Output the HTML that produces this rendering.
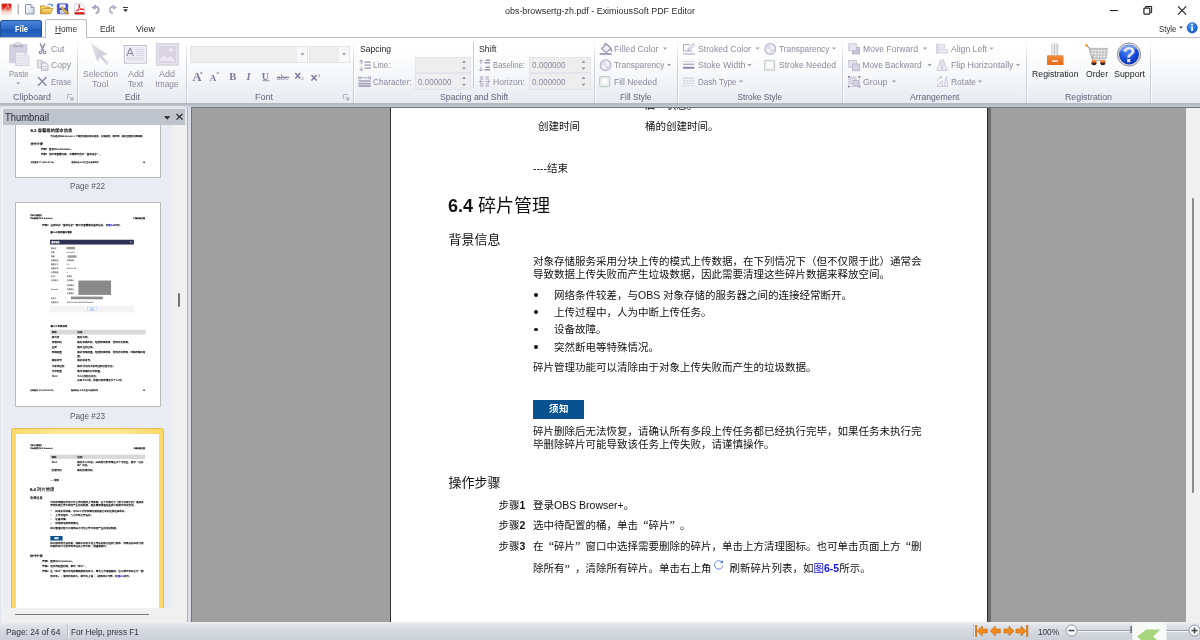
<!DOCTYPE html>
<html lang="zh">
<head>
<meta charset="utf-8">
<title>obs-browsertg-zh.pdf - EximiousSoft PDF Editor</title>
<style>
*{box-sizing:border-box;margin:0;padding:0}
html,body{width:1200px;height:640px;overflow:hidden;background:#fff}
body{position:relative;font-family:"Liberation Sans","Noto Sans CJK SC",sans-serif;font-size:9px;color:#1e1e1e}
.abs{position:absolute}
#app{left:0;top:0;width:1200px;height:640px;will-change:transform}
.t{position:absolute;white-space:nowrap;line-height:1.06;transform-origin:0 50%}
.pg{position:absolute;left:0;top:0;width:596px;height:843px;transform-origin:0 0;font-family:"Liberation Sans","Noto Sans CJK SC",sans-serif;color:#111}
.pl{position:absolute;white-space:nowrap;line-height:1.47;color:#111;text-spacing-trim:space-all}
.ql,.qr{display:inline-block;width:1em;font-style:normal;font-family:"Liberation Serif","Noto Serif CJK SC",serif;font-size:1.15em;line-height:1;width:.87em}
.ql{text-align:right}
.qr{text-align:left}
.th{text-rendering:geometricPrecision}
.th .pl{-webkit-text-stroke:.4px}
.lb{font-family:"Liberation Sans",sans-serif;font-weight:bold}
</style>
</head>
<body>
<div class="abs" id="app">
<div class="abs" style="left:0;top:0;width:1200px;height:38px;background:#fff"></div>
<span class="t" style="left:505.00px;top:6.82px;font-size:8.30px;color:#2b2b2b;transform:scaleX(1.075);">obs-browsertg-zh.pdf - EximiousSoft PDF Editor</span>
<div class="abs" style="left:0;top:37px;width:1200px;height:66px;background:linear-gradient(#fff 0,#fff 22%,#f7f8fa 55%,#eceff3 85%,#e7eaef 100%)"></div>
<div class="abs" style="left:0;top:37px;width:1200px;height:1px;background:#bcc1c9"></div>
<div class="abs" style="left:0;top:103px;width:1200px;height:2.500px;background:linear-gradient(#b2b7c0,#bcc1c9)"></div>
<div class="abs" style="left:0;top:105.500px;width:188px;height:2px;background:#dfe2e8"></div><div class="abs" style="left:188px;top:105.500px;width:1012px;height:2px;background:#c6cad1"></div>
<div class="abs" style="left:0;top:19.500px;width:42px;height:17.500px;border-radius:3px 3px 0 0;background:linear-gradient(#4a86d8 0,#2f6cc9 45%,#1f59b6 55%,#2a68c4 100%);border:1px solid #1d4f9f;border-bottom:none"></div>
<span class="t" style="left:14.50px;top:24.92px;font-size:8.30px;color:#fff;transform:scaleX(0.909);font-weight:bold;">File</span>
<div class="abs" style="left:45px;top:19px;width:42px;height:19px;border-radius:3px 3px 0 0;background:#fff;border:1px solid #b9bec7;border-bottom:none"></div>
<span class="t" style="left:55.00px;top:25.12px;font-size:8.30px;color:#2b2b2b;">Home</span>
<div class="abs" style="left:55px;top:33.1px;width:6px;height:1px;background:#444"></div>
<span class="t" style="left:99.50px;top:25.12px;font-size:8.30px;color:#2b2b2b;transform:scaleX(1.014);">Edit</span>
<span class="t" style="left:136.00px;top:25.12px;font-size:8.30px;color:#2b2b2b;transform:scaleX(1.065);">View</span>
<span class="t" style="left:1159.00px;top:25.02px;font-size:8.30px;color:#2b2b2b;transform:scaleX(0.948);">Style</span>
<div class="abs" style="left:76.5px;top:41px;width:1px;height:62px;background:linear-gradient(rgba(205,208,216,0),#cfd2da 35%,#c9cdd5 100%)"></div>
<div class="abs" style="left:77.5px;top:41px;width:1px;height:62px;background:linear-gradient(rgba(255,255,255,0),#fff 35%,#fff 100%)"></div>
<div class="abs" style="left:186.0px;top:41px;width:1px;height:62px;background:linear-gradient(rgba(205,208,216,0),#cfd2da 35%,#c9cdd5 100%)"></div>
<div class="abs" style="left:187.0px;top:41px;width:1px;height:62px;background:linear-gradient(rgba(255,255,255,0),#fff 35%,#fff 100%)"></div>
<div class="abs" style="left:353.0px;top:41px;width:1px;height:62px;background:linear-gradient(rgba(205,208,216,0),#cfd2da 35%,#c9cdd5 100%)"></div>
<div class="abs" style="left:354.0px;top:41px;width:1px;height:62px;background:linear-gradient(rgba(255,255,255,0),#fff 35%,#fff 100%)"></div>
<div class="abs" style="left:594.0px;top:41px;width:1px;height:62px;background:linear-gradient(rgba(205,208,216,0),#cfd2da 35%,#c9cdd5 100%)"></div>
<div class="abs" style="left:595.0px;top:41px;width:1px;height:62px;background:linear-gradient(rgba(255,255,255,0),#fff 35%,#fff 100%)"></div>
<div class="abs" style="left:676.5px;top:41px;width:1px;height:62px;background:linear-gradient(rgba(205,208,216,0),#cfd2da 35%,#c9cdd5 100%)"></div>
<div class="abs" style="left:677.5px;top:41px;width:1px;height:62px;background:linear-gradient(rgba(255,255,255,0),#fff 35%,#fff 100%)"></div>
<div class="abs" style="left:841.5px;top:41px;width:1px;height:62px;background:linear-gradient(rgba(205,208,216,0),#cfd2da 35%,#c9cdd5 100%)"></div>
<div class="abs" style="left:842.5px;top:41px;width:1px;height:62px;background:linear-gradient(rgba(255,255,255,0),#fff 35%,#fff 100%)"></div>
<div class="abs" style="left:1025.5px;top:41px;width:1px;height:62px;background:linear-gradient(rgba(205,208,216,0),#cfd2da 35%,#c9cdd5 100%)"></div>
<div class="abs" style="left:1026.5px;top:41px;width:1px;height:62px;background:linear-gradient(rgba(255,255,255,0),#fff 35%,#fff 100%)"></div>
<div class="abs" style="left:1149.5px;top:41px;width:1px;height:62px;background:linear-gradient(rgba(205,208,216,0),#cfd2da 35%,#c9cdd5 100%)"></div>
<div class="abs" style="left:1150.5px;top:41px;width:1px;height:62px;background:linear-gradient(rgba(255,255,255,0),#fff 35%,#fff 100%)"></div>
<div class="abs" style="left:473px;top:42px;width:1px;height:46px;background:#c9ccd4"></div>
<div class="abs" style="left:190px;top:46.4px;width:118.4px;height:16.2px;background:#eeeeef;border:1px solid #e3e3e9"></div>
<div class="abs" style="left:297px;top:47.4px;width:10.4px;height:14.2px;background:#f8f8fa"></div>
<div class="abs" style="left:308.6px;top:46.4px;width:41px;height:16.2px;background:#eeeeef;border:1px solid #e3e3e9"></div>
<div class="abs" style="left:338.5px;top:47.4px;width:10.2px;height:14.2px;background:#f8f8fa"></div>
<div class="abs" style="left:415px;top:57.3px;width:56px;height:16.2px;background:#eeeeef;border:1px solid #e3e3e9"></div>
<div class="abs" style="left:415px;top:73.4px;width:56px;height:16.2px;background:#eeeeef;border:1px solid #e3e3e9"></div>
<div class="abs" style="left:529px;top:57.3px;width:61.5px;height:16.2px;background:#eeeeef;border:1px solid #e3e3e9"></div>
<div class="abs" style="left:529px;top:73.4px;width:61.5px;height:16.2px;background:#eeeeef;border:1px solid #e3e3e9"></div>
<span class="t" style="left:8.75px;top:70.32px;font-size:8.30px;color:#8d899d;transform:scaleX(0.926);">Paste</span>
<span class="t" style="left:51.00px;top:45.22px;font-size:8.30px;color:#8d899d;transform:scaleX(1.045);">Cut</span>
<span class="t" style="left:51.00px;top:61.22px;font-size:8.30px;color:#8d899d;transform:scaleX(1.032);">Copy</span>
<span class="t" style="left:51.00px;top:78.22px;font-size:8.30px;color:#8d899d;transform:scaleX(0.945);">Erase</span>
<span class="t" style="left:82.50px;top:70.22px;font-size:8.30px;color:#8d899d;transform:scaleX(1.025);">Selection</span>
<span class="t" style="left:91.50px;top:80.02px;font-size:8.30px;color:#8d899d;transform:scaleX(1.084);">Tool</span>
<span class="t" style="left:127.50px;top:70.22px;font-size:8.30px;color:#8d899d;transform:scaleX(1.083);">Add</span>
<span class="t" style="left:127.50px;top:80.02px;font-size:8.30px;color:#8d899d;transform:scaleX(0.985);">Text</span>
<span class="t" style="left:159.00px;top:70.22px;font-size:8.30px;color:#8d899d;transform:scaleX(1.083);">Add</span>
<span class="t" style="left:155.50px;top:80.02px;font-size:8.30px;color:#8d899d;">Image</span>
<span class="t" style="left:373.00px;top:61.22px;font-size:8.30px;color:#8d899d;transform:scaleX(0.972);">Line:</span>
<span class="t" style="left:373.00px;top:77.62px;font-size:8.30px;color:#8d899d;">Character:</span>
<span class="t" style="left:417.50px;top:77.62px;font-size:8.30px;color:#8d899d;transform:scaleX(0.968);">0.000000</span>
<span class="t" style="left:493.00px;top:61.22px;font-size:8.30px;color:#8d899d;transform:scaleX(0.937);">Baseline:</span>
<span class="t" style="left:493.00px;top:77.62px;font-size:8.30px;color:#8d899d;transform:scaleX(1.035);">Horizon:</span>
<span class="t" style="left:531.50px;top:61.22px;font-size:8.30px;color:#8d899d;transform:scaleX(0.968);">0.000000</span>
<span class="t" style="left:531.50px;top:77.62px;font-size:8.30px;color:#8d899d;transform:scaleX(0.968);">0.000000</span>
<span class="t" style="left:614.00px;top:45.22px;font-size:8.30px;color:#8d899d;transform:scaleX(1.060);">Filled Color</span>
<span class="t" style="left:614.00px;top:61.22px;font-size:8.30px;color:#8d899d;">Transparency</span>
<span class="t" style="left:614.00px;top:77.62px;font-size:8.30px;color:#8d899d;transform:scaleX(1.024);">Fill Needed</span>
<span class="t" style="left:697.50px;top:45.22px;font-size:8.30px;color:#8d899d;transform:scaleX(1.044);">Stroked Color</span>
<span class="t" style="left:697.50px;top:61.22px;font-size:8.30px;color:#8d899d;transform:scaleX(1.062);">Stoke Width</span>
<span class="t" style="left:697.50px;top:77.62px;font-size:8.30px;color:#8d899d;transform:scaleX(0.974);">Dash Type</span>
<span class="t" style="left:779.00px;top:45.22px;font-size:8.30px;color:#8d899d;">Transparency</span>
<span class="t" style="left:779.00px;top:61.22px;font-size:8.30px;color:#8d899d;transform:scaleX(1.029);">Stroke Needed</span>
<span class="t" style="left:862.50px;top:45.22px;font-size:8.30px;color:#8d899d;transform:scaleX(1.037);">Move Forward</span>
<span class="t" style="left:862.50px;top:61.22px;font-size:8.30px;color:#8d899d;">Move Backward</span>
<span class="t" style="left:862.50px;top:77.62px;font-size:8.30px;color:#8d899d;transform:scaleX(1.062);">Group</span>
<span class="t" style="left:951.00px;top:45.22px;font-size:8.30px;color:#8d899d;transform:scaleX(1.040);">Align Left</span>
<span class="t" style="left:951.00px;top:61.22px;font-size:8.30px;color:#8d899d;transform:scaleX(1.059);">Flip Horizontally</span>
<span class="t" style="left:951.00px;top:77.62px;font-size:8.30px;color:#8d899d;transform:scaleX(1.022);">Rotate</span>
<span class="t" style="left:359.50px;top:45.22px;font-size:8.30px;color:#1f1f1f;transform:scaleX(1.034);">Sapcing</span>
<span class="t" style="left:479.00px;top:45.22px;font-size:8.30px;color:#1f1f1f;transform:scaleX(1.054);">Shift</span>
<span class="t" style="left:1031.50px;top:69.92px;font-size:8.30px;color:#1f1f1f;transform:scaleX(1.050);">Registration</span>
<span class="t" style="left:1085.50px;top:69.92px;font-size:8.30px;color:#1f1f1f;transform:scaleX(1.037);">Order</span>
<span class="t" style="left:1114.00px;top:69.92px;font-size:8.30px;color:#1f1f1f;transform:scaleX(1.066);">Support</span>
<span class="t" style="left:13.00px;top:92.92px;font-size:8.30px;color:#66637a;transform:scaleX(1.070);">Clipboard</span>
<span class="t" style="left:124.50px;top:92.92px;font-size:8.30px;color:#66637a;transform:scaleX(1.049);">Edit</span>
<span class="t" style="left:254.50px;top:92.92px;font-size:8.30px;color:#66637a;transform:scaleX(1.084);">Font</span>
<span class="t" style="left:439.70px;top:92.92px;font-size:8.30px;color:#66637a;transform:scaleX(1.050);">Spacing and Shift</span>
<span class="t" style="left:620.00px;top:92.92px;font-size:8.30px;color:#66637a;">Fill Style</span>
<span class="t" style="left:737.50px;top:92.92px;font-size:8.30px;color:#66637a;">Stroke Style</span>
<span class="t" style="left:909.50px;top:92.92px;font-size:8.30px;color:#66637a;transform:scaleX(1.032);">Arrangement</span>
<span class="t" style="left:1065.00px;top:92.92px;font-size:8.30px;color:#66637a;transform:scaleX(1.061);">Registration</span>
<svg class="abs" style="left:0;top:0" width="1200" height="106" viewBox="0 0 1200 106">
<defs><linearGradient id="gApp" x1="0" y1="0" x2="0" y2="1"><stop offset="0" stop-color="#cf1512"/><stop offset=".42" stop-color="#e23a2c"/><stop offset=".7" stop-color="#f3c9bf"/><stop offset="1" stop-color="#fbf3ee"/></linearGradient><linearGradient id="gFold" x1="0" y1="0" x2="0" y2="1"><stop offset="0" stop-color="#fbe48a"/><stop offset="1" stop-color="#e9a825"/></linearGradient><linearGradient id="gDoc" x1="0" y1="0" x2="1" y2="1"><stop offset="0" stop-color="#fff"/><stop offset="1" stop-color="#c9d3e6"/></linearGradient><radialGradient id="gSup" cx=".4" cy=".3" r=".8"><stop offset="0" stop-color="#4f8cf5"/><stop offset=".6" stop-color="#1648d8"/><stop offset="1" stop-color="#0a2fa8"/></radialGradient><linearGradient id="gOr" x1="0" y1="0" x2="0" y2="1"><stop offset="0" stop-color="#f08a3c"/><stop offset="1" stop-color="#e8681a"/></linearGradient><linearGradient id="gKey" x1="0" y1="0" x2="1" y2="0"><stop offset="0" stop-color="#d8d8d8"/><stop offset=".5" stop-color="#fafafa"/><stop offset="1" stop-color="#c4c4c4"/></linearGradient><radialGradient id="gInfo" cx=".4" cy=".3" r=".8"><stop offset="0" stop-color="#4a9af5"/><stop offset="1" stop-color="#0f55c8"/></radialGradient><linearGradient id="gArr" x1="0" y1="0" x2="1" y2="1"><stop offset="0" stop-color="#e6e4ed"/><stop offset=".6" stop-color="#cfccdb"/><stop offset="1" stop-color="#e2e0ea"/></linearGradient></defs>
<rect x="1.500" y="3.500" width="10" height="11" rx="1" fill="url(#gApp)" stroke="#e9c9c2" stroke-width=".5"/>
<path d="M4 10c2-1 3.5-3.5 3.8-5.5c.5 2 1.5 4 3.2 5" fill="none" stroke="#fff" stroke-width=".7" opacity=".8"/>
<rect x="17.700" y="4" width=".9" height="10.500" fill="#8f8f8f"/>
<path d="M25.5 4.5h5.5l3 3v6.5h-8.5z" fill="url(#gDoc)" stroke="#6f7d9b" stroke-width=".8"/><path d="M31 4.5v3h3" fill="#e8edf6" stroke="#6f7d9b" stroke-width=".7"/>
<path d="M40.5 13.8v-8h4l1 1.2h4.5v2" fill="#f3d36a" stroke="#b98a1e" stroke-width=".7"/><path d="M40.5 13.8l2.2-5.3h10.3l-2.6 5.3z" fill="url(#gFold)" stroke="#b98a1e" stroke-width=".7"/><path d="M47.5 5.2c1.5-1.6 3.5-1.4 4.6 0" fill="none" stroke="#4a7ec2" stroke-width="1"/><path d="M53 3.8v2.4h-2.4z" fill="#4a7ec2"/>
<rect x="57.3" y="3.8" width="10.5" height="10" rx=".8" fill="#4a50c8" stroke="#34389a" stroke-width=".6"/><rect x="59.5" y="4.3" width="6" height="3.6" fill="#e9ebf5"/><rect x="59.8" y="10" width="5" height="3.6" fill="#cfd3ea"/><path d="M62 6.5l6.2 6.2l-1.6 1.5l-6-6.3z" fill="#e9c24e" stroke="#8a6a1a" stroke-width=".5"/><circle cx="68" cy="13.3" r="1" fill="#d8574a"/>
<path d="M74.5 3.8h7l3.3 3.3v7.4h-10.3z" fill="#fff" stroke="#b9b9c3" stroke-width=".6"/><rect x="74.8" y="12.2" width="9.7" height="2.2" fill="#d8161a"/><path d="M76.3 11c2.2-1 3.5-4 3.4-5.8c-.1-1-1.2-.8-1 .3c.3 2 2.300 4 4.800 4.300c1 .1.900-.8 0-.8c-2.400 0-5.200.8-7.200 2z" fill="none" stroke="#d8161a" stroke-width=".9"/>
<path d="M95.800 13.300c3.800-1.400 4.300-6.800-.8-6.600" fill="none" stroke="#a3a0c2" stroke-width="1.800"/><path d="M91.300 7.800l4.600-3.600l-.3 5.600z" fill="#a3a0c2"/>
<path d="M112.700 13.300c-3.800-1.400-4.300-6.800.8-6.600" fill="none" stroke="#b4b2cd" stroke-width="1.800"/><path d="M117.200 7.800l-4.600-3.600l.3 5.600z" fill="#b4b2cd"/>
<rect x="123" y="7" width="5" height="1" fill="#333"/><path d="M123 9.300h5l-2.500 2.700z" fill="#333"/>
<rect x="1110" y="10" width="7.800" height="1.100" fill="#222"/>
<rect x="1143.900" y="8.200" width="5.900" height="5.900" rx=".8" fill="none" stroke="#222" stroke-width="1.200"/><path d="M1145.600 7.800v-.9q0-.4 .4-.4h5q.6 0 .6 .6v5q0 .4-.4 .4h-1" fill="none" stroke="#222" stroke-width="1.100"/>
<path d="M1178 6.400l8.200 8.200M1186.200 6.400l-8.200 8.200" stroke="#222" stroke-width="1.150"/>
<path d="M1179.00 26.40h4l-2.0 2.4z" fill="#444"/>
<circle cx="1192.200" cy="27.800" r="5.200" fill="url(#gInfo)" stroke="#0c47aa" stroke-width=".5"/><rect x="1191.200" y="26.600" width="1.700" height="4.300" fill="#fff"/><circle cx="1192" cy="24.600" r="1" fill="#fff"/>
<rect x="9.500" y="44.500" width="17.500" height="18.300" rx="1" fill="#d3d0df" stroke="#c3bfd2" stroke-width=".6"/><rect x="14.800" y="42.800" width="6.500" height="2.600" rx="1.200" fill="#e2e0ea" stroke="#b9b5c9" stroke-width=".6"/><rect x="12.800" y="45" width="10.500" height="2.200" rx=".6" fill="#b7b3c8"/>
<path d="M15.800 52h9.200l3.800 3.800v9.600h-13z" fill="#edebf3" stroke="#c5c1d4" stroke-width=".7"/><path d="M25 52v3.800h3.800" fill="#f7f6fa" stroke="#c5c1d4" stroke-width=".6"/><path d="M17.500 55.500h6M17.500 57.500h9.500M17.500 59.500h9.500M17.500 61.500h9.500M17.500 63.500h9.500" stroke="#dedbe8" stroke-width=".7"/>
<path d="M16.10 82.35h4.4l-2.2 2.5z" fill="#aeaabd"/>
<path d="M40.200 43.500l3.300 7.300M44.800 43.500l-3.300 7.300" stroke="#8f8aa8" stroke-width="1.500" fill="none"/><circle cx="40.500" cy="52.300" r="1.300" fill="none" stroke="#8f8aa8" stroke-width="1.100"/><circle cx="44.500" cy="52.300" r="1.300" fill="none" stroke="#8f8aa8" stroke-width="1.100"/>
<path d="M37.300 60.300h5l1.500 1.500v6h-6.500z" fill="#e3e1eb" stroke="#b9b5c9" stroke-width=".7"/><path d="M41.500 62.800h4.500l2 2v5.500h-6.500z" fill="#eeedf3" stroke="#9d98b0" stroke-width=".7"/><path d="M43 66.500h3.500M43 68.300h3.500" stroke="#b9b5c9" stroke-width=".6"/>
<path d="M38 77l8.500 8.800M46.500 77l-8.500 8.800" stroke="#8f8aa8" stroke-width="1.500"/>
<path d="M67.5 99v-4.500h4.500" fill="none" stroke="#a5a2b3" stroke-width=".8"/><path d="M69.8 96.800l2.800 2.800M72.8 97.300v2.500h-2.500" fill="none" stroke="#8e8ba0" stroke-width=".8"/>
<path d="M343.3 99v-4.500h4.500" fill="none" stroke="#a5a2b3" stroke-width=".8"/><path d="M345.6 96.800l2.800 2.800M348.6 97.300v2.500h-2.500" fill="none" stroke="#8e8ba0" stroke-width=".8"/>
<path d="M91.800 44.300l15.400 10.200l-5.800 .9l7.200 7.700l-2 1.400l-7.200-8l-1.800 5z" fill="url(#gArr)" stroke="#d3d0de" stroke-width=".6"/>
<rect x="124.300" y="45.500" width="22" height="17.600" fill="#eceaf2" stroke="#b9b5c9" stroke-width=".9"/><rect x="125.300" y="46.500" width="20" height="15.600" fill="none" stroke="#f8f7fb" stroke-width=".8"/><path d="M136 49.500h8M136 51.500h8M136 53.500h8M136 55.500h8M126.800 57.800h17.200M126.800 59.800h17.200" stroke="#d3d0df" stroke-width=".7"/>
<text x="126.200" y="56.200" font-family="Liberation Sans,sans-serif" font-size="11.500" fill="#8f8aa8">A</text>
<rect x="156.300" y="43.500" width="22.400" height="21.800" fill="#e0dee8" stroke="#d0cddb" stroke-width=".8"/><rect x="158.300" y="45.500" width="18.400" height="17.800" fill="#d8d5e1" stroke="#eceaf2" stroke-width=".6"/><circle cx="170.800" cy="50" r="1.700" fill="#f1f0f6"/><path d="M158.800 60.500l5-5.500l3.500 4l3-3l5.500 5.500z" fill="#ebe9f2"/>
<path d="M300.40 53.00h4.2l-2.1 2.4z" fill="#a39fb2"/>
<path d="M341.90 53.00h4.2l-2.1 2.4z" fill="#a39fb2"/>
<text x="192.500" y="81" font-family="Liberation Serif,serif" font-weight="bold" font-size="12.500" fill="#7d789a">A</text><path d="M199.800 73.400l1.500-1.700l1.500 1.700z" fill="#7d789a"/>
<text x="209.800" y="81" font-family="Liberation Serif,serif" font-weight="bold" font-size="9" fill="#7d789a">A</text><path d="M216.300 72.500h3l-1.500 1.700z" fill="#7d789a"/>
<text x="229.300" y="80" font-family="Liberation Serif,serif" font-weight="bold" font-size="10.500" fill="#7d789a">B</text>
<text x="246.500" y="80" font-family="Liberation Serif,serif" font-weight="bold" font-style="italic" font-size="10.500" fill="#7d789a">I</text>
<text x="261.800" y="79.600" font-family="Liberation Serif,serif" font-weight="bold" font-size="10" fill="#7d789a">U</text><rect x="262.500" y="80.400" width="7" height=".8" fill="#7d789a"/>
<text x="277" y="80" font-family="Liberation Serif,serif" font-size="8.500" fill="#7d789a">abc</text><rect x="276.500" y="77" width="12.800" height=".8" fill="#7d789a"/>
<path d="M295.300 73l5 5.500M300.300 73l-5 5.500" stroke="#7d789a" stroke-width="1.500"/><text x="301.500" y="80" font-family="Liberation Serif,serif" font-weight="bold" font-size="4" fill="#7d789a">2</text>
<path d="M311.500 75l5 5.500M316.500 75l-5 5.500" stroke="#7d789a" stroke-width="1.500"/><text x="318" y="76.500" font-family="Liberation Serif,serif" font-weight="bold" font-size="4" fill="#7d789a">2</text>
<path d="M361.300 60v4.300M359.600 61.900l1.700-1.900l1.700 1.900M361.300 66.700v4.300M359.600 69.100l1.700 1.900l1.700-1.900" fill="none" stroke="#9b96b2" stroke-width=".9"/><path d="M364.500 62.200h6.200M364.500 65.200h6.200M364.500 68.200h6.200" stroke="#9b96b2" stroke-width="1.200"/>
<path d="M359 76.200v3.300M370.300 76.200v3.300" stroke="#9b96b2" stroke-width="1"/><path d="M360 77.800h9.300M361.400 76.500l-1.500 1.300l1.500 1.300M367.900 76.500l1.500 1.300l-1.500 1.300" fill="none" stroke="#9b96b2" stroke-width=".7"/><path d="M358.500 81h12.300M358.500 83.600h12.300M358.500 86.200h12.300" stroke="#a5a0bc" stroke-width="1.700"/>
<path d="M462.00 62.80h4l-2.0 -2.2z" fill="#8f8ba3"/>
<path d="M462.00 67.60h4l-2.0 2.2z" fill="#8f8ba3"/>
<path d="M462.00 78.90h4l-2.0 -2.2z" fill="#8f8ba3"/>
<path d="M462.00 83.70h4l-2.0 2.2z" fill="#8f8ba3"/>
<path d="M581.50 62.80h4l-2.0 -2.2z" fill="#8f8ba3"/>
<path d="M581.50 67.60h4l-2.0 2.2z" fill="#8f8ba3"/>
<path d="M581.50 78.90h4l-2.0 -2.2z" fill="#8f8ba3"/>
<path d="M581.50 83.70h4l-2.0 2.2z" fill="#8f8ba3"/>
<path d="M481 59.800v4.500M479.300 61.600l1.700-1.800l1.700 1.800M481 66.500v4.500M479.300 69.200l1.700 1.800l1.700-1.800" fill="none" stroke="#9b96b2" stroke-width=".9"/><path d="M485.500 60.300h4.500M484.500 62.800h5.500M485.500 67.300h4.500M484.500 69.800h5.500" stroke="#9b96b2" stroke-width="1.600"/>
<path d="M480 77h3.500M485.500 77h3.500M480 79h3.500M485.500 79h3.500M480 84h3.500M485.500 84h3.500M480 86h3.500M485.500 86h3.500" stroke="#9b96b2" stroke-width=".9"/><path d="M479.500 81.500h4M485.500 81.500h4M481 80.200l-1.500 1.300l1.500 1.300M488 80.200l1.500 1.300l-1.500 1.300" fill="none" stroke="#9b96b2" stroke-width=".8"/>
</svg>
<svg class="abs" style="left:0;top:0" width="1200" height="106" viewBox="0 0 1200 106">
<path d="M601.600 48.600l4.900-4.700l4.500 4.600l-4.900 4.200z" fill="#f1f0f6" stroke="#8f8aa8" stroke-width="1.100" stroke-linejoin="round"/><path d="M603.800 45.300c-.6-2.200 2.200-2.800 2.700-.6" fill="none" stroke="#8f8aa8" stroke-width=".9"/><path d="M610.600 48.300c1.700 .8 1.900 2.900 1.300 4.300c-1.100-.9-1.700-2.500-1.300-4.300z" fill="#8f8aa8"/><rect x="599.600" y="53" width="12" height="1.900" fill="#a39eba"/>
<circle cx="605.6" cy="65.2" r="5.300" fill="#f3f2f8" stroke="#b7b2cb" stroke-width="1.300"/><path d="M605.6 65.2v-5a5 5 0 0 0 -5 5zM605.6 65.2v5a5 5 0 0 0 5 -5z" fill="#dedbe8"/>
<rect x="599.6" y="76.6" width="10" height="10" rx="1" fill="#eff1f1" stroke="#c6cbcc" stroke-width="1.100"/><rect x="601.2" y="78.19999999999999" width="6.800" height="6.800" fill="#fdfdfd" stroke="#e0e4e5" stroke-width=".7"/>
<path d="M662.90 47.40h4.2l-2.1 2.4z" fill="#a39fb2"/>
<path d="M666.90 64.00h4.2l-2.1 2.4z" fill="#a39fb2"/>
<path d="M683.500 44.500v6.500h9" fill="none" stroke="#9b96b2" stroke-width=".8"/><path d="M683.500 44.500h6" stroke="#9b96b2" stroke-width=".8"/><path d="M687.800 50.300l.6-2.200l5-4.800l1.500 1.500l-5 4.900z" fill="#f3f2f7" stroke="#9b96b2" stroke-width=".7"/><rect x="683" y="53" width="12" height="1.800" fill="#cdcadb"/>
<rect x="683" y="61" width="11.300" height=".8" fill="#c9c5d8"/><rect x="683" y="63.600" width="11.300" height="1.300" fill="#a9a4bf"/><rect x="683" y="66.800" width="11.300" height="2" fill="#8f8aaa"/>
<path d="M683 78.200h11.300" stroke="#b3afc6" stroke-width=".7"/><path d="M683 80.900h11.300" stroke="#b3afc6" stroke-width=".7" stroke-dasharray="2.200 .8"/><path d="M683 83.400h11.300" stroke="#b3afc6" stroke-width=".7" stroke-dasharray="1.500 .8"/><path d="M683 85.900h11.300" stroke="#b3afc6" stroke-width=".7" stroke-dasharray=".8 1"/>
<path d="M755.40 47.40h4.2l-2.1 2.4z" fill="#a39fb2"/>
<path d="M747.40 64.00h4.2l-2.1 2.4z" fill="#a39fb2"/>
<path d="M738.90 80.40h4.2l-2.1 2.4z" fill="#a39fb2"/>
<circle cx="770.3" cy="49" r="5.300" fill="#f3f2f8" stroke="#b7b2cb" stroke-width="1.300"/><path d="M770.3 49v-5a5 5 0 0 0 -5 5zM770.3 49v5a5 5 0 0 0 5 -5z" fill="#dedbe8"/>
<rect x="764.6" y="60.2" width="10" height="10" rx="1" fill="#eff1f1" stroke="#c6cbcc" stroke-width="1.100"/><rect x="766.2" y="61.800000000000004" width="6.800" height="6.800" fill="#fdfdfd" stroke="#e0e4e5" stroke-width=".7"/>
<path d="M831.90 47.40h4.2l-2.1 2.4z" fill="#a39fb2"/>
<rect x="852.500" y="47.500" width="7" height="6.500" fill="#c9c5d9" stroke="#a5a0bb" stroke-width=".7"/><rect x="848.800" y="43.800" width="7.500" height="7" fill="#e6e4ee" stroke="#b9b5c9" stroke-width=".7"/>
<rect x="848.800" y="60.500" width="7.500" height="7" fill="#e6e4ee" stroke="#b9b5c9" stroke-width=".7"/><rect x="852.500" y="64" width="7" height="6.800" fill="#d7d4e2" stroke="#aeaac2" stroke-width=".7"/>
<rect x="850" y="78" width="6" height="5.500" fill="#e6e4ee" stroke="#b9b5c9" stroke-width=".7"/><rect x="853" y="80.500" width="5.500" height="5" fill="#d7d4e2" stroke="#aeaac2" stroke-width=".7"/><path d="M848.800 76.800h10.700v9.700h-10.700z" fill="none" stroke="#8e89a8" stroke-width=".7" stroke-dasharray="1 1.200"/>
<rect x="848" y="76" width="1.600" height="1.600" fill="#7d7899"/>
<rect x="858.7" y="76" width="1.600" height="1.600" fill="#7d7899"/>
<rect x="848" y="85.8" width="1.600" height="1.600" fill="#7d7899"/>
<rect x="858.7" y="85.8" width="1.600" height="1.600" fill="#7d7899"/>
<path d="M922.90 47.40h4.2l-2.1 2.4z" fill="#a39fb2"/>
<path d="M927.40 64.00h4.2l-2.1 2.4z" fill="#a39fb2"/>
<path d="M891.90 80.40h4.2l-2.1 2.4z" fill="#a39fb2"/>
<rect x="936.600" y="43.500" width=".9" height="10.500" fill="#a5a0bb"/><rect x="938.800" y="44.500" width="6" height="3.600" fill="#eceaf2" stroke="#cfccdc" stroke-width=".7"/><rect x="938.800" y="49.500" width="8.800" height="3.600" fill="#eceaf2" stroke="#cfccdc" stroke-width=".7"/>
<path d="M940.800 59.500l-4 11h4.800zM943.200 59.500l4 11h-4.800z" fill="#eeedf4" stroke="#c4c0d3" stroke-width=".8"/>
<path d="M946.500 76.500l1.300 10h-4zM936.800 86.500l5.500-6v6z" fill="#eeedf4" stroke="#c4c0d3" stroke-width=".8"/><path d="M937.500 81c0-2.500 1.500-3.800 3.500-3.800" fill="none" stroke="#c4c0d3" stroke-width="1"/><path d="M940.300 75.500l2 1.700l-2 1.700z" fill="#c4c0d3"/>
<path d="M989.40 47.40h4.2l-2.1 2.4z" fill="#a39fb2"/>
<path d="M1015.90 64.00h4.2l-2.1 2.4z" fill="#a39fb2"/>
<path d="M977.90 80.40h4.2l-2.1 2.4z" fill="#a39fb2"/>
<rect x="1051.500" y="43.500" width="6.500" height="13" rx="1.500" fill="url(#gKey)" stroke="#c8c8c8" stroke-width=".5"/><rect x="1054" y="45" width="1" height="9" fill="#bdbdbd"/>
<rect x="1047" y="55.300" width="16.500" height="9.800" rx=".8" fill="url(#gOr)"/><rect x="1052.300" y="60.300" width="5.500" height="1.600" fill="#fbe9dc"/>
<circle cx="1086.500" cy="45.300" r="1.400" fill="#f5a623"/><path d="M1087 45.800l2.300 2.200l3.300 12.300h12.800" fill="none" stroke="#9b9b9b" stroke-width="1.100"/><path d="M1089.300 48.300h18.200l-1.300 10.200h-13.900z" fill="#c6c6c6" stroke="#a9a9a9" stroke-width=".6"/><rect x="1091.60" y="50.00" width="1.700" height="1.500" fill="#f7f7f7"/><rect x="1094.65" y="50.00" width="1.700" height="1.500" fill="#f7f7f7"/><rect x="1097.70" y="50.00" width="1.700" height="1.500" fill="#f7f7f7"/><rect x="1100.75" y="50.00" width="1.700" height="1.500" fill="#f7f7f7"/><rect x="1103.80" y="50.00" width="1.700" height="1.500" fill="#f7f7f7"/><rect x="1091.35" y="52.90" width="1.700" height="1.500" fill="#f7f7f7"/><rect x="1094.40" y="52.90" width="1.700" height="1.500" fill="#f7f7f7"/><rect x="1097.45" y="52.90" width="1.700" height="1.500" fill="#f7f7f7"/><rect x="1100.50" y="52.90" width="1.700" height="1.500" fill="#f7f7f7"/><rect x="1103.55" y="52.90" width="1.700" height="1.500" fill="#f7f7f7"/><rect x="1094.15" y="55.80" width="1.700" height="1.500" fill="#f7f7f7"/><rect x="1097.20" y="55.80" width="1.700" height="1.500" fill="#f7f7f7"/><rect x="1100.25" y="55.80" width="1.700" height="1.500" fill="#f7f7f7"/><rect x="1103.30" y="55.80" width="1.700" height="1.500" fill="#f7f7f7"/>
<circle cx="1094" cy="62.200" r="2.500" fill="#e8481c"/><circle cx="1102.800" cy="62.200" r="2.500" fill="#e8481c"/><path d="M1091.500 62.700a2.500 2.500 0 0 0 5 0zM1100.300 62.700a2.500 2.500 0 0 0 5 0z" fill="#2c2c2c"/><path d="M1092.300 60.900h3.400M1101.100 60.900h3.400" stroke="#f8c030" stroke-width="1.100"/>
<circle cx="1129" cy="54.500" r="11.600" fill="#dcdde0" stroke="#8c8f96" stroke-width="1"/><circle cx="1129" cy="54.500" r="10" fill="url(#gSup)"/><path d="M1119.500 52a9.800 9.800 0 0 1 18.500 -2.500c-5.500 -1.500 -13 0 -18.500 2.500z" fill="#fff" opacity=".3"/>
<text x="1129" y="62.300" text-anchor="middle" font-family="Liberation Sans,sans-serif" font-weight="bold" font-size="21.500" fill="#ececec" stroke="#9fb0d8" stroke-width=".3">?</text>
</svg>
<div class="abs" style="left:0px;top:107.5px;width:1200px;height:514.5px;background:#e5e8ed;"></div>
<div class="abs" style="left:191px;top:106.8px;width:1009px;height:515px;background:#747474;"></div>
<div class="abs" style="left:192px;top:107.6px;width:994px;height:514px;background:#a0a0a0;"></div>
<div class="abs" style="left:1186px;top:107.6px;width:14px;height:514px;background:#f0f0f0;"></div>
<div class="abs" style="left:1192.3px;top:197.8px;width:1.9px;height:295.3px;background:#8a8a8a;border-radius:1px"></div>
<div class="abs" style="left:187px;top:107px;width:1px;height:515px;background:#adb2bf;"></div>
<div class="abs" style="left:188px;top:107px;width:3px;height:515px;background:#dcdde9;"></div>
<div class="abs" style="left:1.5px;top:107px;width:1px;height:515px;background:#f6f7f9;"></div>
<div class="abs" style="left:2.5px;top:109px;width:182.5px;height:15.8px;background:#bfc4cc;"></div>
<span class="t" style="left:4.50px;top:112.74px;font-size:10.00px;color:#2c2a36;transform:scaleX(0.942);">Thumbnail</span>
<svg class="abs" style="left:160px;top:110px" width="26" height="14" viewBox="160 110 26 14"><path d="M164 116.200h6.400l-3.200 3.400z" fill="#222"/><path d="M176.500 114l6 5.600M182.500 114l-6 5.600" stroke="#222" stroke-width="1.100"/></svg>
<div class="abs" style="left:2.5px;top:124.8px;width:169.8px;height:483.2px;background:#e9ecf2;"></div>
<div class="abs" style="left:172.2px;top:124.8px;width:14.8px;height:483.2px;background:#f0f0f0;"></div>
<div class="abs" style="left:178.4px;top:292.7px;width:1.6px;height:14.6px;background:#747474;border-radius:1px"></div>
<div class="abs" style="left:2.5px;top:608px;width:184px;height:13.5px;background:#f0f0f0;"></div>
<div class="abs" style="left:15px;top:613.6px;width:134px;height:1.2px;background:#757575;"></div>
<div class="abs" style="left:14.5px;top:124.8px;width:146.5px;height:53.300000000000026px;overflow:hidden"><div class="abs" style="left:0;top:-150.0px;width:146.5px;height:203.3px;background:#fff;border:1.5px solid #bcbcbc"><div class="pg th" style="transform:scale(0.24);left:0px;top:0px"><div class="pl" style="left:60.42px;top:631.10px;font-size:18px;font-weight:500"><b class="lb">6.3</b> 查看桶的版本信息</div>
<div class="pl" style="left:143.75px;top:661.44px;font-size:9.6px;">可以通过OBS Browser+ 户端查询桶的版本信息、存储类别、桶声明、桶的创建时间等参数。</div>
<div class="pl" style="left:60.42px;top:690.20px;font-size:13px;">操作步骤</div>
<div class="pl" style="right:466.50px;top:714.95px;font-size:10.5px">步骤<b class="lb">1</b></div>
<div class="pl" style="left:137.50px;top:714.95px;font-size:10.5px;">登录OBS Browser+。</div>
<div class="pl" style="right:466.50px;top:735.78px;font-size:10.5px">步骤<b class="lb">2</b></div>
<div class="pl" style="left:137.50px;top:735.78px;font-size:10.5px;">选中待查看的桶，右键单击选中<i class="ql">“</i>基本信息<i class="qr">”</i>。</div>
<div class="pl" style="left:60.42px;top:768.50px;font-size:8.5px;">文档版本 17 (2022-01-20)</div>
<div class="pl" style="left:231.25px;top:768.50px;font-size:8.5px;">版权所有 © 华为技术有限公司</div>
<div class="pl" style="right:58px;top:768.50px;font-size:8.5px">18</div></div></div></div>
<span class="t" style="left:70.00px;top:182.03px;font-size:8.70px;color:#58606e;transform:scaleX(0.940);">Page #22</span>
<div class="abs" style="left:14.5px;top:202.4px;width:146.5px;height:204.30000000000004px;overflow:hidden"><div class="abs" style="left:0;top:0.0px;width:146.5px;height:204.3px;background:#fff;border:1.5px solid #bcbcbc"><div class="pg th" style="transform:scale(0.24);left:0px;top:0px"><div class="pl" style="left:58.00px;top:44.75px;font-size:8.5px;">对象存储服务</div>
<div class="pl" style="left:58.00px;top:56.75px;font-size:8.5px;">工具指南(OBS Browser+)</div>
<div class="pl" style="right:58px;top:56.75px;font-size:8.5px">6 高级桶设置</div>
<div class="pl" style="right:460.67px;top:84.95px;font-size:10.5px">步骤<b class="lb">3</b></div>
<div class="pl" style="left:143.33px;top:84.95px;font-size:10.5px;">在弹出的<i class="ql">“</i>基本信息<i class="qr">”</i>窗口中查看桶的基本信息，如<span style="color:#1414e6">图<b class="lb">6-4</b></span>所示。</div>
<div class="pl" style="left:143.33px;top:117.82px;font-size:10px;font-weight:bold">图 <b class="lb">6-4</b> 桶的基本信息</div>
<div class="abs" style="left:141.7px;top:152.5px;width:349.6px;height:20.8px;background:#2d3050"></div>
<div class="pl" style="left:147.67px;top:157.67px;font-size:8.5px;color:#fff;font-weight:bold">基本信息</div>
<div class="pl" style="left:475.25px;top:156.57px;font-size:10px;color:#fff">×</div>
<div class="pl" style="left:145.83px;top:183.82px;font-size:7.5px;color:#777">桶名称</div>
<div class="pl" style="left:145.83px;top:201.74px;font-size:7.5px;color:#777">区域</div>
<div class="pl" style="left:211.25px;top:201.74px;font-size:7.5px;color:#777">cn-north-4</div>
<div class="pl" style="left:145.83px;top:218.40px;font-size:7.5px;color:#777">用量</div>
<div class="pl" style="left:145.83px;top:235.49px;font-size:7.5px;color:#777">存储类别</div>
<div class="pl" style="left:211.25px;top:235.49px;font-size:7.5px;color:#777">标准存储</div>
<div class="pl" style="left:145.83px;top:252.15px;font-size:7.5px;color:#777">桶版本号</div>
<div class="pl" style="left:211.25px;top:252.15px;font-size:7.5px;color:#777">3.0</div>
<div class="pl" style="left:145.83px;top:268.82px;font-size:7.5px;color:#777">创建时间</div>
<div class="pl" style="left:211.25px;top:268.82px;font-size:7.5px;color:#777">2021-06-18</div>
<div class="pl" style="left:145.83px;top:285.49px;font-size:7.5px;color:#777">对象数量</div>
<div class="pl" style="left:211.25px;top:285.49px;font-size:7.5px;color:#777">4</div>
<div class="pl" style="left:145.83px;top:302.15px;font-size:7.5px;color:#777">多AZ</div>
<div class="pl" style="left:211.25px;top:302.15px;font-size:7.5px;color:#777">未开启</div>
<div class="pl" style="left:145.83px;top:318.82px;font-size:7.5px;color:#777">访问域名</div>
<div class="pl" style="left:211.25px;top:318.82px;font-size:7.5px;color:#777">内网域名</div>
<div class="pl" style="left:211.25px;top:336.74px;font-size:7.5px;color:#777">外网域名</div>
<div class="pl" style="left:145.83px;top:355.07px;font-size:7.5px;color:#777">Endpoint</div>
<div class="pl" style="left:211.25px;top:355.07px;font-size:7.5px;color:#777">内网域名</div>
<div class="pl" style="left:211.25px;top:372.99px;font-size:7.5px;color:#777">外网域名</div>
<div class="pl" style="left:145.83px;top:390.90px;font-size:7.5px;color:#777">账号ID</div>
<div class="pl" style="left:145.83px;top:408.40px;font-size:7.5px;color:#777">创建时间</div>
<div class="pl" style="left:211.25px;top:408.40px;font-size:7.5px;color:#777">2021-06-18 10:24:58 GMT+08:00</div>
<div class="abs" style="left:210.4px;top:182.9px;width:35.4px;height:10.4px;background:#9a9a9a"></div>
<div class="abs" style="left:214.6px;top:217.5px;width:37.5px;height:10.8px;background:#9a9a9a"></div>
<div class="abs" style="left:260.0px;top:322.5px;width:135.8px;height:60.8px;background:#8a8a8a"></div>
<div class="abs" style="left:229.2px;top:390.0px;width:132.5px;height:10.8px;background:#8c8c8c"></div>
<div class="abs" style="left:141.7px;top:427.5px;width:350.0px;height:28.7px;background:#f3f3f3"></div>
<div class="abs" style="left:297.9px;top:435.4px;width:37.5px;height:14.2px;border:1.5px solid #5a8fe8;background:#fff;color:#3a6fd8;font-size:8px;line-height:11px;text-align:center">确定</div>
<div class="pl" style="left:143.33px;top:509.07px;font-size:10px;font-weight:bold">表 <b class="lb">6-1</b> 参数说明</div>
<div class="abs" style="left:141.7px;top:527.5px;width:398.7px;height:20.4px;background:#d9d9d9"></div>
<div class="pl" style="left:148.96px;top:530.78px;font-size:10.5px;">参数</div>
<div class="pl" style="left:255.62px;top:530.78px;font-size:10.5px;">说明</div>
<div class="pl" style="left:148.96px;top:552.03px;font-size:10.5px;">桶名称</div>
<div class="pl" style="left:255.62px;top:552.03px;font-size:10.5px;">桶的名称。</div>
<div class="pl" style="left:148.96px;top:573.28px;font-size:10.5px;">存储类别</div>
<div class="pl" style="left:255.62px;top:573.28px;font-size:10.5px;">桶的存储类别，包括标准存储、低频访问存储。</div>
<div class="pl" style="left:148.96px;top:594.95px;font-size:10.5px;">区域</div>
<div class="pl" style="left:255.62px;top:594.95px;font-size:10.5px;">桶所在的区域。</div>
<div class="pl" style="left:148.96px;top:616.62px;font-size:10.5px;">存储用量</div>
<div class="pl" style="left:255.62px;top:616.62px;font-size:10.5px;">桶的存储用量。包括标准存储、低频访问存储、归档存储的用</div>
<div class="pl" style="left:255.62px;top:630.78px;font-size:10.5px;">量。</div>
<div class="pl" style="left:148.96px;top:649.95px;font-size:10.5px;">桶版本号</div>
<div class="pl" style="left:255.62px;top:649.95px;font-size:10.5px;">桶的版本号。</div>
<div class="pl" style="left:148.96px;top:671.62px;font-size:10.5px;">多版本控制</div>
<div class="pl" style="left:255.62px;top:671.62px;font-size:10.5px;">桶中对象的多版本控制功能状态。</div>
<div class="pl" style="left:148.96px;top:692.87px;font-size:10.5px;">对象数量</div>
<div class="pl" style="left:255.62px;top:692.87px;font-size:10.5px;">桶中存储的对象数量。</div>
<div class="pl" style="left:148.96px;top:714.53px;font-size:10.5px;">多AZ</div>
<div class="pl" style="left:255.62px;top:714.53px;font-size:10.5px;">多AZ功能的状态。</div>
<div class="pl" style="left:255.62px;top:730.78px;font-size:10.5px;">开启多AZ后，数据冗余存储至多个AZ中。</div>
<div class="pl" style="left:58.33px;top:775.17px;font-size:8.5px;">文档版本 17 (2022-01-20)</div>
<div class="pl" style="left:229.17px;top:775.17px;font-size:8.5px;">版权所有 © 华为技术有限公司</div>
<div class="pl" style="right:58px;top:775.17px;font-size:8.5px">19</div></div></div></div>
<span class="t" style="left:70.00px;top:411.73px;font-size:8.70px;color:#58606e;transform:scaleX(0.940);">Page #23</span>
<div class="abs" style="left:11.250px;top:428px;width:152.500px;height:180px;overflow:hidden"><div class="abs" style="left:0;top:0;width:152.500px;height:214px;border-radius:2.500px;background:linear-gradient(90deg,#fbd867,#fde58d 25%,#fde58d 75%,#fbd867);border:1px solid #e6bb58"></div><div class="abs" style="left:4.750px;top:5.500px;width:143.300px;height:204px;background:#fff;overflow:hidden"><div class="pg th" style="transform:scale(0.24)"><div class="pl" style="left:58.00px;top:42.25px;font-size:8.5px;">对象存储服务</div>
<div class="pl" style="left:58.00px;top:55.25px;font-size:8.5px;">工具指南(OBS Browser+)</div>
<div class="pl" style="right:58px;top:55.25px;font-size:8.5px">6 高级桶设置</div>
<div class="abs" style="left:140.500px;top:86px;width:397.500px;height:18px;background:#d9d9d9"></div>
<div class="pl" style="left:148.00px;top:88.28px;font-size:10.5px;">参数</div>
<div class="pl" style="left:255.00px;top:88.28px;font-size:10.5px;">说明</div>
<div class="pl" style="left:148.00px;top:108.88px;font-size:10.5px;">多AZ</div>
<div class="pl" style="left:255.00px;top:108.88px;font-size:10.5px;">桶的多AZ状态。开启后冗余存储在多个可用区，显示<i class="ql">“</i>已开</div>
<div class="pl" style="left:255.00px;top:122.98px;font-size:10.5px;">启<i class="qr">”</i>状态。</div>
<div class="pl" style="left:148.00px;top:144.28px;font-size:10.5px;">创建时间</div>
<div class="pl" style="left:255.00px;top:144.28px;font-size:10.5px;">桶的创建时间。</div>
<div class="pl" style="left:143.00px;top:186.28px;font-size:10.5px;">----结束</div>
<div class="pl" style="left:58.00px;top:218.27px;font-size:18px;"><b class="lb">6.4</b> 碎片管理</div>
<div class="pl" style="left:58.60px;top:254.64px;font-size:13px;">背景信息</div>
<div class="pl" style="left:143.00px;top:278.88px;font-size:10.5px;">对象存储服务采用分块上传的模式上传数据，在下列情况下（但不仅限于此）通常会</div>
<div class="pl" style="left:143.00px;top:291.58px;font-size:10.5px;">导致数据上传失败而产生垃圾数据，因此需要清理这些碎片数据来释放空间。</div>
<div class="abs" style="left:143.80px;top:318.20px;width:3.800px;height:3.800px;border-radius:50%;background:#111"></div>
<div class="pl" style="left:164.00px;top:313.08px;font-size:10.5px;">网络条件较差，与OBS 对象存储的服务器之间的连接经常断开。</div>
<div class="abs" style="left:143.80px;top:335.30px;width:3.800px;height:3.800px;border-radius:50%;background:#111"></div>
<div class="pl" style="left:164.00px;top:330.18px;font-size:10.5px;">上传过程中，人为中断上传任务。</div>
<div class="abs" style="left:143.80px;top:352.60px;width:3.800px;height:3.800px;border-radius:50%;background:#111"></div>
<div class="pl" style="left:164.00px;top:347.48px;font-size:10.5px;">设备故障。</div>
<div class="abs" style="left:143.80px;top:369.80px;width:3.800px;height:3.800px;border-radius:50%;background:#111"></div>
<div class="pl" style="left:164.00px;top:364.68px;font-size:10.5px;">突然断电等特殊情况。</div>
<div class="pl" style="left:143.00px;top:384.68px;font-size:10.5px;">碎片管理功能可以清除由于对象上传失败而产生的垃圾数据。</div>
<div class="abs" style="left:143px;top:424.5px;width:51.300px;height:19.300px;background:#07528f"></div>
<div class="pl" style="left:159.00px;top:427.42px;font-size:9.5px;color:#fff;font-weight:bold;letter-spacing:.5px">须知</div>
<div class="pl" style="left:143.00px;top:449.18px;font-size:10.5px;">碎片删除后无法恢复，请确认所有多段上传任务都已经执行完毕，如果任务未执行完</div>
<div class="pl" style="left:143.00px;top:461.78px;font-size:10.5px;">毕删除碎片可能导致该任务上传失败，请谨慎操作。</div>
<div class="pl" style="left:58.60px;top:498.14px;font-size:13px;">操作步骤</div>
<div class="pl" style="right:460.70px;top:522.98px;font-size:10.5px">步骤<b class="lb">1</b></div>
<div class="pl" style="right:460.70px;top:543.28px;font-size:10.5px">步骤<b class="lb">2</b></div>
<div class="pl" style="right:460.70px;top:564.18px;font-size:10.5px">步骤<b class="lb">3</b></div>
<div class="pl" style="left:143.00px;top:522.98px;font-size:10.5px;">登录OBS Browser+。</div>
<div class="pl" style="left:143.00px;top:543.28px;font-size:10.5px;">选中待配置的桶，单击<i class="ql">“</i>碎片<i class="qr">”</i>。</div>
<div class="pl" style="left:143.00px;top:564.18px;font-size:10.5px;">在<i class="ql">“</i>碎片<i class="qr">”</i>窗口中选择需要删除的碎片，单击上方清理图标。也可单击页面上方<i class="ql">“</i>删</div>
<div class="pl" style="left:143.00px;top:584.48px;font-size:10.5px;">除所有<i class="qr">”</i>，清除所有碎片。单击右上角<svg width="11" height="11" viewBox="0 0 11 11" style="margin:0 6px 0 1px;vertical-align:2.300px"><path d="M9 3.200a4.200 4.200 0 1 0 .9 3.600" fill="none" stroke="#6888f0" stroke-width="1"/><path d="M9.900 .9v3h-3z" fill="#4f74ee"/></svg>刷新碎片列表，如<span style="color:#1414e6">图<b class="lb">6-5</b></span>所示。</div></div></div></div>
<div class="abs" style="left:390px;top:107.600px;width:601px;height:514px;overflow:hidden"><div class="abs" style="left:0;top:0;width:598px;height:514px;background:#2e2e2e"></div><div class="abs" style="left:598px;top:0;width:3px;height:514px;background:#6e6e6e"></div><div class="abs" style="left:1px;top:0;width:596px;height:514px;background:#fff;overflow:hidden"><div class="pg" style="left:-1px;top:-132.6px"><div class="pl" style="left:58.00px;top:42.25px;font-size:8.5px;">对象存储服务</div>
<div class="pl" style="left:58.00px;top:55.25px;font-size:8.5px;">工具指南(OBS Browser+)</div>
<div class="pl" style="right:58px;top:55.25px;font-size:8.5px">6 高级桶设置</div>
<div class="abs" style="left:140.500px;top:86px;width:397.500px;height:18px;background:#d9d9d9"></div>
<div class="pl" style="left:148.00px;top:88.28px;font-size:10.5px;">参数</div>
<div class="pl" style="left:255.00px;top:88.28px;font-size:10.5px;">说明</div>
<div class="pl" style="left:148.00px;top:108.88px;font-size:10.5px;">多AZ</div>
<div class="pl" style="left:255.00px;top:108.88px;font-size:10.5px;">桶的多AZ状态。开启后冗余存储在多个可用区，显示<i class="ql">“</i>已开</div>
<div class="pl" style="left:255.00px;top:122.98px;font-size:10.5px;">启<i class="qr">”</i>状态。</div>
<div class="pl" style="left:148.00px;top:144.28px;font-size:10.5px;">创建时间</div>
<div class="pl" style="left:255.00px;top:144.28px;font-size:10.5px;">桶的创建时间。</div>
<div class="pl" style="left:143.00px;top:186.28px;font-size:10.5px;">----结束</div>
<div class="pl" style="left:58.00px;top:218.27px;font-size:18px;"><b class="lb">6.4</b> 碎片管理</div>
<div class="pl" style="left:58.60px;top:254.64px;font-size:13px;">背景信息</div>
<div class="pl" style="left:143.00px;top:278.88px;font-size:10.5px;">对象存储服务采用分块上传的模式上传数据，在下列情况下（但不仅限于此）通常会</div>
<div class="pl" style="left:143.00px;top:291.58px;font-size:10.5px;">导致数据上传失败而产生垃圾数据，因此需要清理这些碎片数据来释放空间。</div>
<div class="abs" style="left:143.80px;top:318.20px;width:3.800px;height:3.800px;border-radius:50%;background:#111"></div>
<div class="pl" style="left:164.00px;top:313.08px;font-size:10.5px;">网络条件较差，与OBS 对象存储的服务器之间的连接经常断开。</div>
<div class="abs" style="left:143.80px;top:335.30px;width:3.800px;height:3.800px;border-radius:50%;background:#111"></div>
<div class="pl" style="left:164.00px;top:330.18px;font-size:10.5px;">上传过程中，人为中断上传任务。</div>
<div class="abs" style="left:143.80px;top:352.60px;width:3.800px;height:3.800px;border-radius:50%;background:#111"></div>
<div class="pl" style="left:164.00px;top:347.48px;font-size:10.5px;">设备故障。</div>
<div class="abs" style="left:143.80px;top:369.80px;width:3.800px;height:3.800px;border-radius:50%;background:#111"></div>
<div class="pl" style="left:164.00px;top:364.68px;font-size:10.5px;">突然断电等特殊情况。</div>
<div class="pl" style="left:143.00px;top:384.68px;font-size:10.5px;">碎片管理功能可以清除由于对象上传失败而产生的垃圾数据。</div>
<div class="abs" style="left:143px;top:424.5px;width:51.300px;height:19.300px;background:#07528f"></div>
<div class="pl" style="left:159.00px;top:427.42px;font-size:9.5px;color:#fff;font-weight:bold;letter-spacing:.5px">须知</div>
<div class="pl" style="left:143.00px;top:449.18px;font-size:10.5px;">碎片删除后无法恢复，请确认所有多段上传任务都已经执行完毕，如果任务未执行完</div>
<div class="pl" style="left:143.00px;top:461.78px;font-size:10.5px;">毕删除碎片可能导致该任务上传失败，请谨慎操作。</div>
<div class="pl" style="left:58.60px;top:498.14px;font-size:13px;">操作步骤</div>
<div class="pl" style="right:460.70px;top:522.98px;font-size:10.5px">步骤<b class="lb">1</b></div>
<div class="pl" style="right:460.70px;top:543.28px;font-size:10.5px">步骤<b class="lb">2</b></div>
<div class="pl" style="right:460.70px;top:564.18px;font-size:10.5px">步骤<b class="lb">3</b></div>
<div class="pl" style="left:143.00px;top:522.98px;font-size:10.5px;">登录OBS Browser+。</div>
<div class="pl" style="left:143.00px;top:543.28px;font-size:10.5px;">选中待配置的桶，单击<i class="ql">“</i>碎片<i class="qr">”</i>。</div>
<div class="pl" style="left:143.00px;top:564.18px;font-size:10.5px;">在<i class="ql">“</i>碎片<i class="qr">”</i>窗口中选择需要删除的碎片，单击上方清理图标。也可单击页面上方<i class="ql">“</i>删</div>
<div class="pl" style="left:143.00px;top:584.48px;font-size:10.5px;">除所有<i class="qr">”</i>，清除所有碎片。单击右上角<svg width="11" height="11" viewBox="0 0 11 11" style="margin:0 6px 0 1px;vertical-align:2.300px"><path d="M9 3.200a4.200 4.200 0 1 0 .9 3.600" fill="none" stroke="#6888f0" stroke-width="1"/><path d="M9.900 .9v3h-3z" fill="#4f74ee"/></svg>刷新碎片列表，如<span style="color:#1414e6">图<b class="lb">6-5</b></span>所示。</div></div></div></div>
<div class="abs" style="left:0;top:621.500px;width:1200px;height:18.500px;background:linear-gradient(#eef0f3 0,#dfe2e8 20%,#d3d7de 60%,#cbd0d8 100%)"></div>
<span class="t" style="left:6.00px;top:627.53px;font-size:8.70px;color:#33313d;transform:scaleX(0.963);">Page: 24 of 64</span>
<span class="t" style="left:71.00px;top:627.53px;font-size:8.70px;color:#33313d;transform:scaleX(0.944);">For Help, press F1</span>
<span class="t" style="left:1037.50px;top:627.53px;font-size:8.70px;color:#33313d;transform:scaleX(0.944);">100%</span>
<div class="abs" style="left:66.5px;top:624px;width:1px;height:14px;background:#b9bdc6;"></div>
<div class="abs" style="left:67.5px;top:624px;width:1px;height:14px;background:#f2f3f6;"></div>
<div class="abs" style="left:972.5px;top:624px;width:1px;height:14px;background:#b9bdc6;"></div>
<div class="abs" style="left:973.5px;top:624px;width:1px;height:14px;background:#f2f3f6;"></div>
<svg class="abs" style="left:960px;top:621px" width="240" height="19" viewBox="960 621 240 19"><g fill="#f08a1d" stroke="#c96a0a" stroke-width=".6"><rect x="975.300" y="625.500" width="1.400" height="11"/><path d="M977.300 631l5-5v3h5v4h-5v3z"/><path d="M990.300 631l5-5v3h5v4h-5v3z"/><path d="M1014 631l-5-5v3h-5v4h5v3z"/><path d="M1026 631l-5-5v3h-5v4h5v3z"/><rect x="1026.500" y="625.500" width="1.400" height="11"/></g><path d="M1078 630.500h112" stroke="#9a9ea8" stroke-width="1"/><path d="M1078 631.500h112" stroke="#f4f5f7" stroke-width="1"/><rect x="1130.300" y="626" width="1.600" height="7" fill="#6f7480"/><circle cx="1071.500" cy="630.500" r="5.500" fill="#f6f7f9" stroke="#8a8e98" stroke-width=".9"/><rect x="1068.500" y="629.800" width="6" height="1.500" fill="#444"/><circle cx="1194.500" cy="630.500" r="5.500" fill="#f6f7f9" stroke="#8a8e98" stroke-width=".9"/><rect x="1191.500" y="629.800" width="6" height="1.500" fill="#444"/><rect x="1193.750" y="627.500" width="1.500" height="6" fill="#444"/><rect x="1132.500" y="622.500" width="34" height="17.500" fill="#f7faf7"/><path d="M1137 636.500l9.500-7h14l-7.500 7l4 3.500h-16z" fill="#a5d67c"/></svg>
</div>
</body>
</html>
